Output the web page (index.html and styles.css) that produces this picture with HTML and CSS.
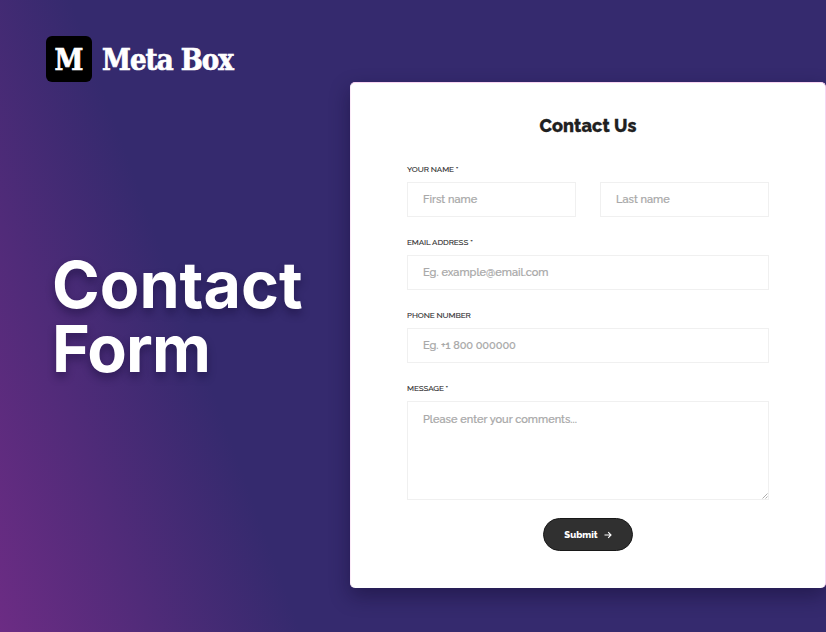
FILE: index.html
```html
<!DOCTYPE html>
<html lang="en">
<head>
<meta charset="utf-8">
<title>Contact Form</title>
<link rel="stylesheet" href="styles.css">
</head>
<body>
<main class="page">
  <section class="intro">
    <div class="brand">
      <div class="brand-mark"><span>M</span></div>
      <div class="brand-name">Meta Box</div>
    </div>
    <h1 class="title"><span>Contact</span><span class="title-second">Form</span></h1>
  </section>
  <form class="card">
    <h2 class="card-title">Contact Us</h2>
    <div class="field">
      <label class="label" for="first">YOUR NAME *</label>
      <div class="row">
        <input class="input" id="first" placeholder="First name">
        <input class="input" placeholder="Last name">
      </div>
    </div>
    <div class="field">
      <label class="label" for="email">EMAIL ADDRESS *</label>
      <input class="input" id="email" placeholder="Eg. example@email.com">
    </div>
    <div class="field">
      <label class="label" for="phone">PHONE NUMBER</label>
      <input class="input phone" id="phone" placeholder="Eg. +1 800 000000">
    </div>
    <div class="field message">
      <label class="label" for="message">MESSAGE *</label>
      <textarea class="input area" id="message" placeholder="Please enter your comments..."></textarea>
      <svg class="grip" width="6" height="6" viewBox="0 0 6 6"><path d="M.5 5.5l5-5M3.5 5.5l2-2" stroke="#999" stroke-width=".8" fill="none"/></svg>
    </div>
    <button class="submit" type="button"><span>Submit</span><svg width="8" height="8" viewBox="0 0 8 8"><path d="M.5 4h6.5M4.2 1.2L7 4 4.2 6.8" stroke="#fff" stroke-width="1.1" fill="none"/></svg></button>
  </form>
</main>
</body>
</html>
```
FILE: styles.css
```css
* { box-sizing: border-box; }
body { margin: 0; }
.page {
  width: 826px;
  height: 632px;
  overflow: hidden;
  display: grid;
  grid-template-columns: 350px 476px;
  background: linear-gradient(70deg, #6c2c84 0%, #352a6e 28.5%, #352a6e 100%);
}
.intro { padding: 36px 0 0 46px; color: #fff; }
.brand { display: flex; align-items: center; gap: 10px; height: 46px; }
.brand-mark {
  width: 46px;
  height: 46px;
  border-radius: 6px;
  background: #000;
  display: flex;
  align-items: center;
  justify-content: center;
}
.brand-mark span, .brand-name {
  padding-top: 2px;
  font: bold 29px/46px "Roboto Slab", "DejaVu Serif Condensed", "DejaVu Serif", serif;
  -webkit-text-stroke: .7px #fff;
  white-space: nowrap;
}
.brand-name { letter-spacing: -.95px; }
.title {
  margin: 171px 0 0 6px;
  font: 700 64.6px/64px Inter, sans-serif;
  text-shadow: 0 5px 9px rgba(15, 8, 45, .4);
}
.title span { display: block; }
.title .title-second { letter-spacing: -.8px; }
.card {
  margin-top: 82px;
  height: 506px;
  padding: 32px 56px 0;
  border: 1px solid #f8d3f2;
  border-left-color: #fbeaf8;
  border-bottom: 0;
  border-radius: 5px;
  background: #fff;
  box-shadow: 0 8px 20px rgba(15, 8, 45, .45);
  display: flex;
  flex-direction: column;
  font-family: Raleway, Lato, sans-serif;
}
.card-title {
  margin: 0 0 26px;
  text-align: center;
  font-size: 18px;
  line-height: 22px;
  font-weight: 800;
  letter-spacing: .1px;
  -webkit-text-stroke: .3px #202020;
  color: #202020;
}
.field { height: 73px; position: relative; }
.label {
  display: block;
  height: 12px;
  line-height: 12px;
  font-size: 8px;
  letter-spacing: -.08px;
  font-weight: 500;
  -webkit-text-stroke: .1px #333;
  color: #333;
}
.row { display: grid; grid-template-columns: 169px 169px; justify-content: space-between; }
.input {
  display: block;
  width: 100%;
  height: 35px;
  margin: 7px 0 0;
  padding: 0 15px;
  border: 1px solid #f0f0f0;
  border-radius: 0;
  outline: 0;
  background: #fff;
  font: 500 11px/14px Raleway, Lato, sans-serif;
  resize: none;
}
.phone { letter-spacing: -.08px; }
.input::placeholder { color: #a8a8a8; -webkit-text-stroke: .2px #a8a8a8; }
.area { height: 99px; padding-top: 11px; }
.message { height: 136px; }
.grip { position: absolute; right: 1px; top: 111px; }
.submit {
  align-self: center;
  width: 90px;
  height: 33px;
  padding: 0;
  border: 1px solid #181818;
  border-radius: 17px;
  background: #303030;
  color: #fff;
  display: flex;
  align-items: center;
  justify-content: center;
  gap: 6px;
  font: 800 9.6px/14px Raleway, Lato, sans-serif;
}
```
